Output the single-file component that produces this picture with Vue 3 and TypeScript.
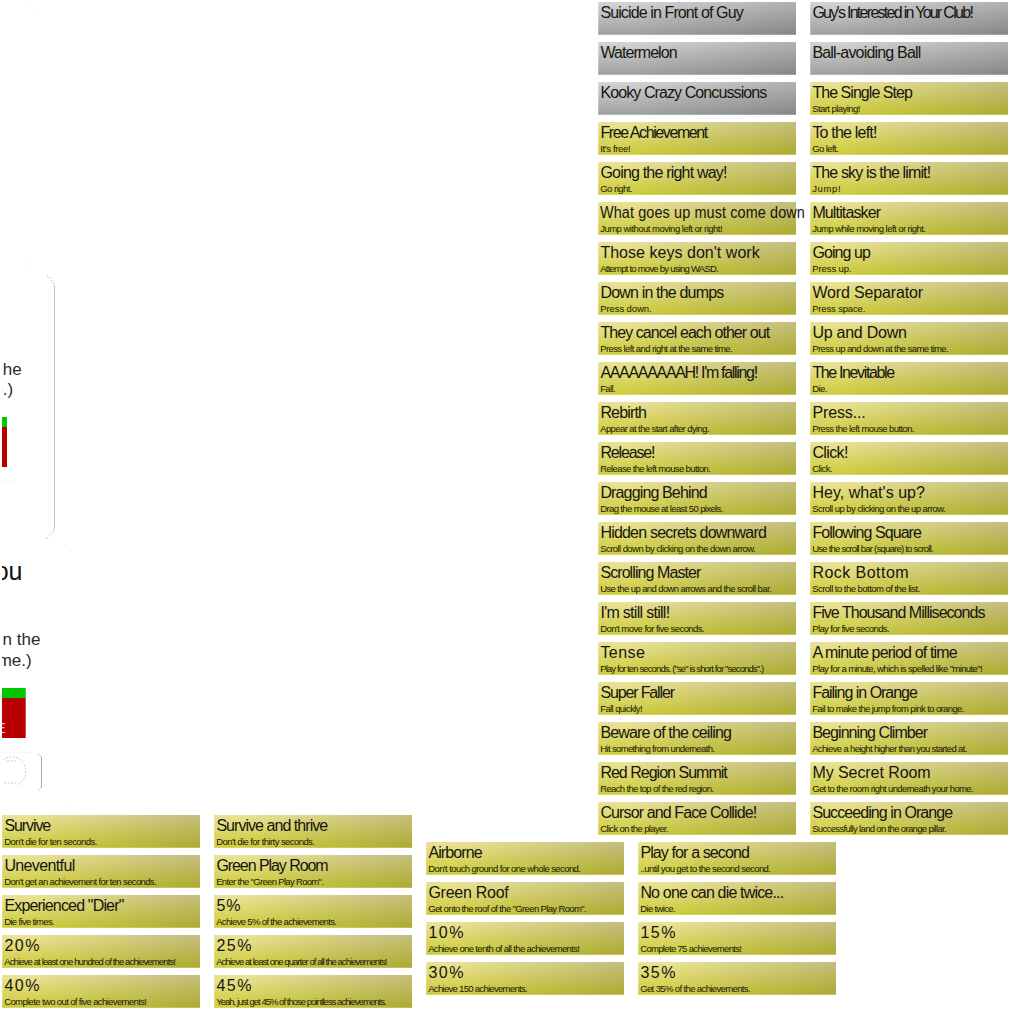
<script setup lang="ts">
type Row = [title: string, titleEnd: number, note?: string, noteEnd?: number]
interface Board { name: string; rows: Row[] }

const FAMILY = '"Liberation Sans", Arial, sans-serif'
const CARD_WIDTH = 198
const CONDENSED = 0.9
const pen = document.createElement('canvas').getContext('2d')!

// Tracking that makes a label's last glyph finish at `end` pixels from the card's left edge.
function tracking(text: string, size: number, inset: number, end: number) {
  pen.font = `${size}px ${FAMILY}`
  const ink = pen.measureText(text).actualBoundingBoxRight
  return { letterSpacing: `${((end - inset - ink) / (text.length - 1)).toFixed(3)}px` }
}

// A title longer than its card is set in condensed glyphs.
function titleStyle(title: string, end: number) {
  return end > CARD_WIDTH ? tracking(title, 16, 0, (end - 2) / CONDENSED) : tracking(title, 16, 2.4, end)
}

const boards: Board[] = [
  {
    name: 'main',
    rows: [
      ['Suicide in Front of Guy', 145.7], ["Guy's Interested in Your Club!", 162.7],
      ['Watermelon', 78.7], ['Ball-avoiding Ball', 110.7],
      ['Kooky Crazy Concussions', 169.3], ['The Single Step', 103, 'Start playing!', 49.7],
      ['Free Achievement', 111.7, "It's free!", 32], ['To the left!', 66, 'Go left.', 28],
      ['Going the right way!', 128, 'Go right.', 34], ['The sky is the limit!', 119.7, 'Jump!', 30],
      ['What goes up must come down', 206, 'Jump without moving left or right!', 124], ['Multitasker', 71.7, 'Jump while moving left or right.', 115.3],
      ["Those keys don't work", 162.7, 'Attempt to move by using WASD.', 120], ['Going up', 61, 'Press up.', 41],
      ['Down in the dumps', 126.3, 'Press down.', 53], ['Word Separator', 113.7, 'Press space.', 54.7],
      ['They cancel each other out', 172.7, 'Press left and right at the same time.', 134], ['Up and Down', 96, 'Press up and down at the same time.', 138],
      ["AAAAAAAAAH! I'm falling!", 158.7, 'Fall.', 17], ['The Inevitable', 85.3, 'Die.', 16.7],
      ['Rebirth', 48, 'Appear at the start after dying.', 111], ['Press...', 54.3, 'Press the left mouse button.', 104],
      ['Release!', 56, 'Release the left mouse button.', 112.3], ['Click!', 37, 'Click.', 22],
      ['Dragging Behind', 108.7, 'Drag the mouse at least 50 pixels.', 124.7], ["Hey, what's up?", 115, 'Scroll up by clicking on the up arrow.', 135],
      ['Hidden secrets downward', 168, 'Scroll down by clicking on the down arrow.', 157], ['Following Square', 112, 'Use the scroll bar (square) to scroll.', 123],
      ['Scrolling Master', 104, 'Use the up and down arrows and the scroll bar.', 173], ['Rock Bottom', 98.3, 'Scroll to the bottom of the list.', 109.7],
      ["I'm still still!", 70.7, "Don't move for five seconds.", 106], ['Five Thousand Milliseconds', 175.7, 'Play for five seconds.', 79],
      ['Tense', 47, 'Play for ten seconds. ("se" is short for "seconds".)', 166], ['A minute period of time', 148.7, 'Play for a minute, which is spelled like "minute"!', 172],
      ['Super Faller', 77.7, 'Fall quickly!', 44], ['Failing in Orange', 108, 'Fail to make the jump from pink to orange.', 153.7],
      ['Beware of the ceiling', 133, 'Hit something from underneath.', 116.3], ['Beginning Climber', 118.7, 'Achieve a height higher than you started at.', 156.7],
      ['Red Region Summit', 130.3, 'Reach the top of the red region.', 115.3], ['My Secret Room', 120.3, 'Get to the room right underneath your home.', 163],
      ['Cursor and Face Collide!', 157.7, 'Click on the player.', 69.7], ['Succeeding in Orange', 143.3, 'Successfully land on the orange pillar.', 136],
    ],
  },
  {
    name: 'left',
    rows: [
      ['Survive', 49.3, "Don't die for ten seconds.", 94.7], ['Survive and thrive', 114.3, "Don't die for thirty seconds.", 100.3],
      ['Uneventful', 72.7, "Don't get an achievement for ten seconds.", 154], ['Green Play Room', 114.3, 'Enter the "Green Play Room".', 109.3],
      ['Experienced "Dier"', 121.7, 'Die five times.', 52], ['5%', 26.3, 'Achieve 5% of the achievements.', 122.3],
      ['20%', 37.3, 'Achieve at least one hundred of the achievements!', 173.3], ['25%', 37.3, 'Achieve at least one quarter of all the achievements!', 172.7],
      ['40%', 37.3, 'Complete two out of five achievements!', 144.3], ['45%', 37.3, 'Yeah, just get 45% of those pointless achievements.', 172],
    ],
  },
  {
    name: 'middle',
    rows: [
      ['Airborne', 56.7, "Don't touch ground for one whole second.", 154.3], ['Play for a second', 111, '..until you get to the second second.', 132.3],
      ['Green Roof', 83.3, 'Get onto the roof of the "Green Play Room".', 160], ['No one can die twice...', 144.7, 'Die twice.', 37],
      ['10%', 37.3, 'Achieve one tenth of all the achievements!', 153.3], ['15%', 37.3, 'Complete 75 achievements!', 103.3],
      ['30%', 37.3, 'Achieve 150 achievements.', 101], ['35%', 37.3, 'Get 35% of the achievements.', 112],
    ],
  },
]
</script>

<template>
  <main class="sheet">
    <svg class="scraps" width="100" height="815" viewBox="0 0 100 815">
      <defs><clipPath id="edge"><rect x="2" y="0" width="98" height="815" /></clipPath></defs>
      <g clip-path="url(#edge)">
        <g fill="none" stroke="#c4c4c4" stroke-width="1">
          <path d="M54.500 286V528" />
          <path d="M47 276Q53 280 54.500 286M54.500 528Q53 534 45 539.500" stroke="#777" stroke-dasharray="1.500 1.500" stroke-width=".6" />
          <path d="M24 268L34 262M65 545l7 6M66 808l6-5M27 3l7 7" stroke="#e4e4e4" stroke-dasharray="2 2" stroke-width=".7" />
          <path d="M2 481.500H15M2 752.500H33" stroke="#f6f6f6" />
          <path d="M41.500 757V788" stroke="#aaa" />
          <path d="M37 753.500Q40 754 41.500 758M41.500 787L38 791" stroke="#bbb" stroke-width=".7" />
          <path d="M3 760C8 755 20 756 24 764C28 773 25 780 17 786M7 761H17M4 783H16" stroke="#aaa" stroke-dasharray="2 1.500" stroke-width=".6" />
        </g>
        <g fill="#2b2b2b" font-size="17" text-anchor="end">
          <text x="21.700" y="374.500">he</text>
          <text x="13.200" y="395">e.)</text>
          <text x="40.400" y="645">n the</text>
          <text x="31.700" y="665.500">me.)</text>
          <text x="22.500" y="580" font-size="25" fill="#111">ou</text>
        </g>
        <rect x="2" y="417" width="5" height="10" fill="#00c800" />
        <rect x="2" y="427" width="5" height="40" fill="#b90000" />
        <rect x="2" y="688" width="23.700" height="10" fill="#00c800" />
        <rect x="2" y="698" width="23.700" height="40" fill="#b90000" />
        <text x="5.500" y="733" font-size="14" text-anchor="end" fill="#f0caca">E</text>
      </g>
    </svg>

    <section v-for="board in boards" :key="board.name" class="board" :class="board.name">
      <article v-for="[title, titleEnd, note, noteEnd] in board.rows" :key="title" class="card" :class="{ locked: !note, wide: titleEnd > CARD_WIDTH }">
        <h2 :style="titleStyle(title, titleEnd)">{{ title }}</h2>
        <p v-if="note" :style="tracking(note, 9.5, 2.2, noteEnd!)">{{ note }}</p>
      </article>
    </section>
  </main>
</template>

<style>
body { margin: 0; background: #fff; }
</style>

<style scoped>
.sheet {
  display: grid;
  grid-template: 815px 27px 171px / 426px 172px 422px;
  width: 1020px;
  height: 1013px;
  overflow: hidden;
  background: #fff;
  font-family: "Liberation Sans", Arial, sans-serif;
}
.scraps { grid-area: 1 / 1; display: block; }
.board {
  display: grid;
  grid-template-columns: 198px 198px;
  grid-auto-rows: 33px;
  gap: 7px 14px;
  align-content: start;
}
.main { grid-area: 1 / 3 / 3 / 4; padding-top: 2px; }
.left { grid-area: 2 / 1 / 4 / 2; padding-left: 2px; }
.middle { grid-area: 3 / 2 / 4 / 4; }
.card {
  box-sizing: border-box;
  padding-top: 2px;
  white-space: nowrap;
  color: #16160e;
  background:
    linear-gradient(to right, transparent 15%, rgba(0, 0, 0, .16)),
    linear-gradient(#ebe298, #cccc38);
  box-shadow: inset 1px -1px rgba(255, 255, 255, .22);
}
.locked {
  background:
    linear-gradient(to right, transparent 15%, rgba(0, 0, 0, .16)),
    linear-gradient(#d4d4d4, #a0a0a0);
}
h2 {
  margin: 0;
  padding-left: 2.4px;
  font-size: 16px;
  font-weight: 400;
  line-height: 18px;
}
.wide h2 {
  margin-left: 2px;
  padding-left: 0;
  transform: scaleX(.9);
  transform-origin: left;
}
p {
  margin: 2px 0 0;
  padding-left: 2.2px;
  font-size: 9.5px;
  line-height: 10px;
}
</style>
